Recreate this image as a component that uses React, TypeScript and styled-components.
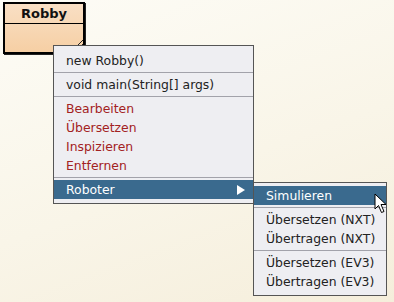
import React from 'react';
import styled, { createGlobalStyle } from 'styled-components';

const GlobalStyle = createGlobalStyle`
  html, body {
    margin: 0;
    padding: 0;
  }
  body {
    font-family: 'DejaVu Sans', 'Liberation Sans', sans-serif;
  }
`;

// Diagram canvas
const Canvas = styled.div`
  position: relative;
  width: 394px;
  height: 302px;
  overflow: hidden;
  background: linear-gradient(160deg, #fdfcf6 0%, #f9f5e8 55%, #f5eedb 100%);
`;

const ClassBox = styled.div`
  position: absolute;
  left: 3px;
  top: 2px;
  width: 78px;
  height: 48px;
  border: 2px solid #000;
  box-shadow: 1px 1px 0 #222;
  background: linear-gradient(180deg, #f9dfc4 0%, #f6cfa4 100%);
  display: flex;
  flex-direction: column;
`;

const ClassHeader = styled.div`
  height: 19px;
  border-bottom: 1px solid #000;
  display: flex;
  align-items: center;
  justify-content: center;
  font-weight: bold;
  font-size: 13px;
  color: #111;
`;

const ClassBody = styled.div`
  flex: 1;
  position: relative;
`;

const ResizeHatch = styled.svg`
  position: absolute;
  right: 0;
  bottom: 0;
`;

// Popup menus
const Menu = styled.div<{ left: number; top: number; width: number; padTop: number }>`
  position: absolute;
  left: ${p => p.left}px;
  top: ${p => p.top}px;
  width: ${p => p.width}px;
  box-sizing: border-box;
  background: #eeeef2;
  border: 1px solid #555;
  padding: ${p => p.padTop}px 0 4px;
  display: flex;
  flex-direction: column;
  font-size: 12.4px;
`;

const Item = styled.div<{ tone?: 'normal' | 'red'; active?: boolean }>`
  height: 19px;
  display: flex;
  align-items: center;
  justify-content: space-between;
  padding: 0 12px 0 12px;
  color: ${p => (p.active ? '#ffffff' : p.tone === 'red' ? '#a32222' : '#222')};
  background: ${p => (p.active ? '#3a6a8e' : 'transparent')};
  white-space: nowrap;
`;

const Separator = styled.div`
  height: 1px;
  margin: 2px 0;
  background: #a2a2aa;
`;

const SubArrow = styled.span`
  width: 0;
  height: 0;
  border-top: 5px solid transparent;
  border-bottom: 5px solid transparent;
  border-left: 8px solid #fff;
  margin-right: -4px;
`;

const Cursor = styled.svg`
  position: absolute;
  left: 374px;
  top: 193px;
`;

const App: React.FC = () => {
  return (
    <>
      <GlobalStyle />
      <Canvas>
        <ClassBox>
          <ClassHeader>Robby</ClassHeader>
          <ClassBody>
            <ResizeHatch width="14" height="14" viewBox="0 0 14 14">
              <line x1="2" y1="14" x2="14" y2="2" stroke="#222" strokeWidth="1" />
              <line x1="6" y1="14" x2="14" y2="6" stroke="#222" strokeWidth="1" />
            </ResizeHatch>
          </ClassBody>
        </ClassBox>

        <Menu left={53} top={45} width={201} padTop={5}>
          <Item>new Robby()</Item>
          <Separator />
          <Item>void main(String[] args)</Item>
          <Separator />
          <Item tone="red">Bearbeiten</Item>
          <Item tone="red">Übersetzen</Item>
          <Item tone="red">Inspizieren</Item>
          <Item tone="red">Entfernen</Item>
          <Separator />
          <Item active>
            Roboter
            <SubArrow />
          </Item>
        </Menu>

        <Menu left={253} top={182} width={134} padTop={3}>
          <Item active>Simulieren</Item>
          <Separator />
          <Item>Übersetzen (NXT)</Item>
          <Item>Übertragen (NXT)</Item>
          <Separator />
          <Item>Übersetzen (EV3)</Item>
          <Item>Übertragen (EV3)</Item>
        </Menu>

        <Cursor width="14" height="22" viewBox="0 0 14 22">
          <path
            d="M1 1 L1 16 L4.5 12.5 L7.5 19.5 L10 18.5 L7 11.5 L12 11.5 Z"
            fill="#fff"
            stroke="#000"
            strokeWidth="1"
            strokeLinejoin="round"
          />
        </Cursor>
      </Canvas>
    </>
  );
};

export default App;
